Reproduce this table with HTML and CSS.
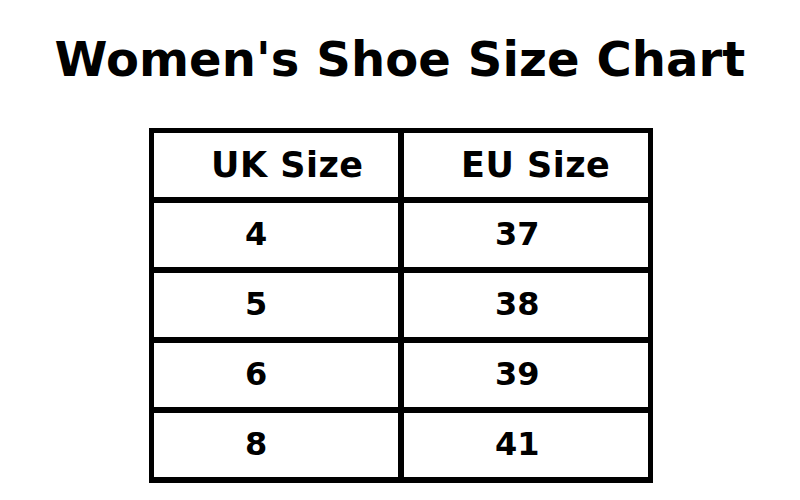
FILE: index.html
```html
<!DOCTYPE html>
<html>
<head>
<meta charset="utf-8">
<link rel="stylesheet" href="styles.css">
</head>
<body>
<h1 class="title">Women's Shoe Size Chart</h1>
<table class="chart">
  <thead>
    <tr><th class="c1">UK Size</th><th class="c2">EU Size</th></tr>
  </thead>
  <tbody>
    <tr><td class="c1">4</td><td class="c2">37</td></tr>
    <tr><td class="c1">5</td><td class="c2">38</td></tr>
    <tr><td class="c1">6</td><td class="c2">39</td></tr>
    <tr><td class="c1">8</td><td class="c2">41</td></tr>
  </tbody>
</table>
</body>
</html>
```
FILE: styles.css
```css
html, body {
  margin: 0;
  padding: 0;
  background: #fff;
}
body {
  font-family: "DejaVu Sans", sans-serif;
  font-weight: bold;
  color: #000;
  width: 800px;
}
.title {
  margin: 0;
  padding-top: 31px;
  font-size: 48px;
  line-height: 56px;
  text-align: center;
  font-weight: bold;
  letter-spacing: 0.1px;
}
.chart {
  margin: 41px 0 0 149px;
  border-collapse: separate;
  border-spacing: 0;
  border-top: 5px solid #000;
  border-left: 5px solid #000;
  border-right: 5px solid #000;
  table-layout: fixed;
}
.chart th, .chart td {
  box-sizing: border-box;
  height: 70px;
  padding: 0;
  text-align: left;
  vertical-align: top;
  border-bottom: 6px solid #000;
}
.c1 {
  width: 250px;
  border-right: 6px solid #000;
}
.c2 {
  width: 244px;
}
.chart th {
  font-size: 35px;
  line-height: 64px;
  padding-left: 57px;
  letter-spacing: 0.5px;
}
.chart td {
  font-size: 32px;
  line-height: 62px;
  padding-left: 91px;
}
```
